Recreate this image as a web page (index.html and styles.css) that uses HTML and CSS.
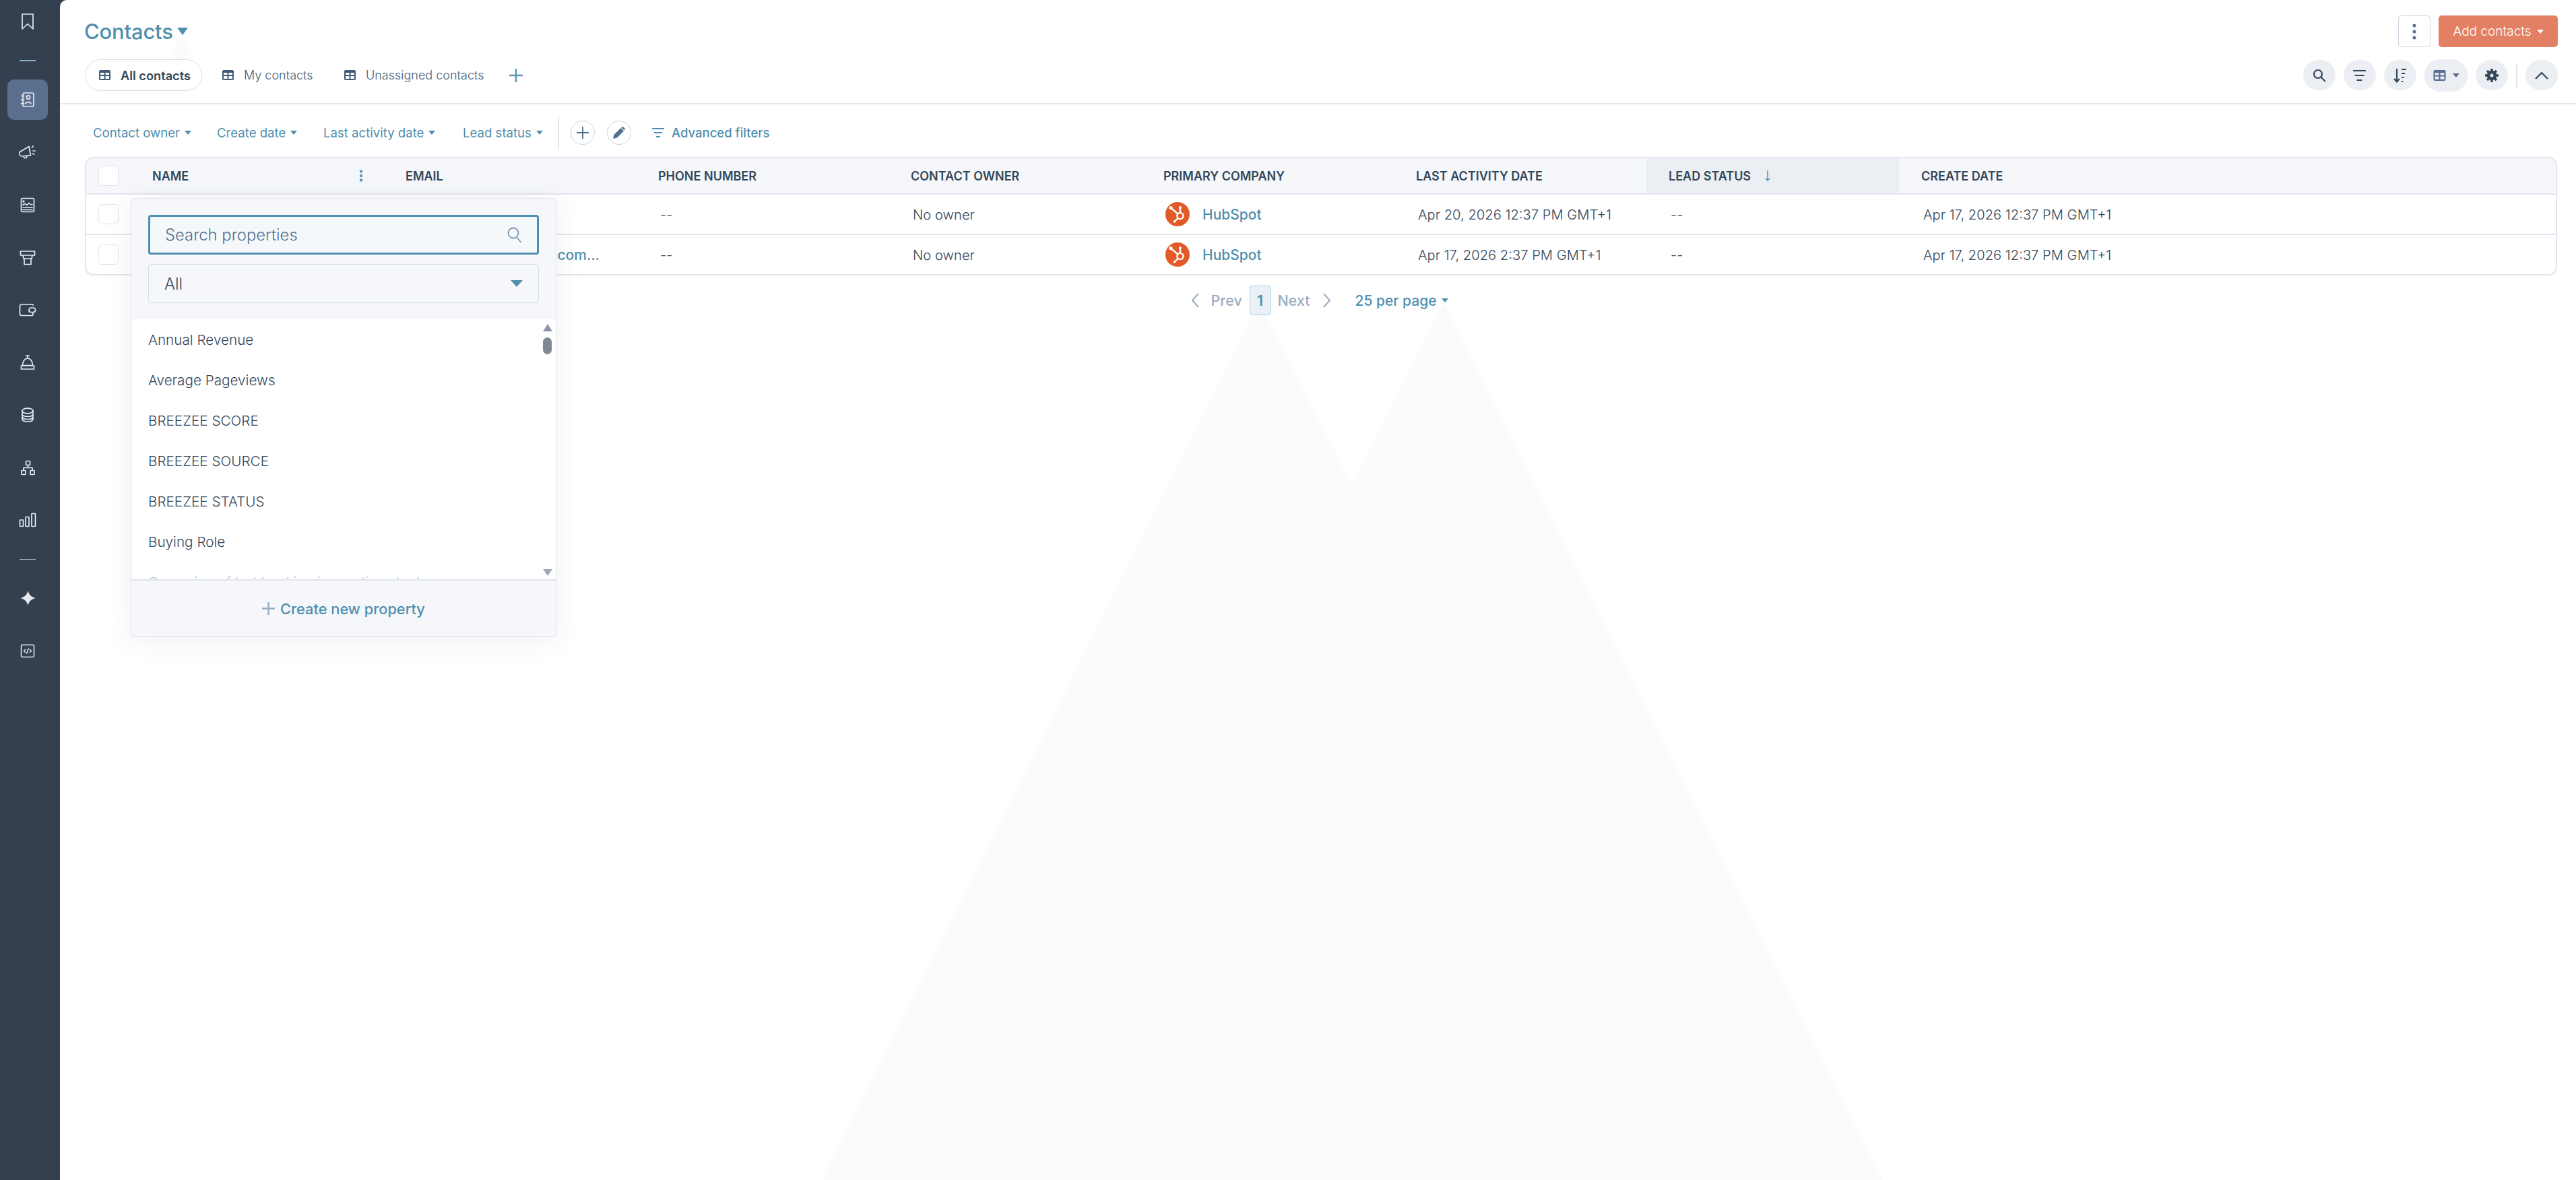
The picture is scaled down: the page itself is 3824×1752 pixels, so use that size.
FILE: index.html
```html
<!DOCTYPE html>
<html lang="en">
<head>
<meta charset="utf-8">
<title>Contacts</title>
<link rel="stylesheet" href="styles.css">
</head>
<body>
<svg width="0" height="0" class="defs">
  <symbol id="tbl" viewBox="0 0 17 15"><path fill-rule="evenodd" d="M2 0h13a2 2 0 0 1 2 2v11a2 2 0 0 1-2 2H2a2 2 0 0 1-2-2V2a2 2 0 0 1 2-2zM2 4v3h5.5V4zM9.5 4v3H15V4zM2 9v4h5.5V9zM9.5 9v4H15V9z"/></symbol>
  <symbol id="hs" viewBox="0 0 36 36">
    <circle cx="18" cy="18" r="18" fill="#e25a27"/>
    <g fill="none" stroke="#fff" stroke-width="2.4" stroke-linecap="round">
      <circle cx="22" cy="20.5" r="4.6"/>
      <path d="M22 16V9M18.500 17.500 9 9.500M18.500 24l-4.500 4.500"/>
    </g>
    <circle cx="22" cy="8" r="2" fill="#fff"/><circle cx="8" cy="8.500" r="2.600" fill="#fff"/><circle cx="13.500" cy="29" r="1.800" fill="#fff"/>
  </symbol>
</svg>
<div class="app">
  <nav class="sidebar">
    <div class="nav-top">
      <svg class="ico" width="20" height="26" viewBox="0 0 20 26"><path d="M2 2h16v22l-8-7.5L2 24z"/></svg>
    </div>
    <div class="nav-sep nav-sep-accent"><span></span></div>
    <div class="nav-item active">
      <svg class="ico" width="22" height="24" viewBox="0 0 22 24"><rect x="4" y="2" width="16" height="20" rx="2"/><path d="M1.5 6.5h4M1.5 12h4M1.5 17.5h4M8 18c.5-3.2 7-3.2 8 0"/><circle cx="12" cy="8.5" r="2.6"/></svg>
    </div>
    <div class="nav-item">
      <svg class="ico" width="26" height="21" viewBox="0 0 26 21"><path d="M1.500 9.500 15 1.500l2.500 13-14 1.500c-2.500-1-3.500-4.500-2-6.500zM7 16c0 3.500 5 3.500 5 0M19.500 3 21 1M21 8h3M20.500 12l2 1"/></svg>
    </div>
    <div class="nav-item">
      <svg class="ico" width="22" height="23" viewBox="0 0 22 23"><rect x="1.500" y="1.500" width="19" height="20" rx="1.500"/><path d="M4 11l3-1.500 3 2 3-3 2 2h3M4 15h14M4 18.500h14"/><circle cx="5" cy="6" r=".8"/></svg>
    </div>
    <div class="nav-item">
      <svg class="ico" width="24" height="23" viewBox="0 0 24 23"><path d="M1.500 2h21v6h-21zM5 8l1 5h12l1-5M7 13h10v8.500H7z"/></svg>
    </div>
    <div class="nav-item">
      <svg class="ico" width="26" height="20" viewBox="0 0 26 20"><path d="M21 3V2H4a2.500 2.500 0 0 0-2.500 2.500V16A2.500 2.500 0 0 0 4 18.500h15a2 2 0 0 0 2-2V14"/><rect x="15" y="7" width="9.500" height="6.500" rx="3"/></svg>
    </div>
    <div class="nav-item">
      <svg class="ico" width="22" height="22" viewBox="0 0 22 22"><path d="M11 1v4M8.500 1h5M3.500 15.500C3.500 9.500 7 5 11 5s7.500 4.500 7.500 10.500zM1.500 16h19v5h-19z"/></svg>
    </div>
    <div class="nav-item">
      <svg class="ico" width="20" height="22" viewBox="0 0 20 22"><ellipse cx="10" cy="5" rx="8" ry="3.800"/><path d="M2 5v12c0 2.500 3.500 4 8 4s8-1.500 8-4V5M2 9.500c0 2.500 3.500 4 8 4s8-1.500 8-4M2 13.500c0 2.500 3.500 4 8 4s8-1.500 8-4"/></svg>
    </div>
    <div class="nav-item">
      <svg class="ico" width="23" height="23" viewBox="0 0 23 23"><rect x="8.500" y="1.500" width="6" height="6" rx=".8"/><rect x="2" y="15.500" width="6" height="6" rx=".8"/><rect x="15" y="15.500" width="6" height="6" rx=".8"/><path d="M11.500 7.500v4M5 15.500v-4h13v4"/></svg>
    </div>
    <div class="nav-item">
      <svg class="ico" width="26" height="22" viewBox="0 0 26 22"><rect x="1.500" y="11" width="5" height="9.500" rx=".6"/><rect x="10" y="6.500" width="5" height="14" rx=".6"/><rect x="19" y="1.500" width="5.500" height="19" rx=".6"/></svg>
    </div>
    <div class="nav-sep"><span></span></div>
    <div class="nav-item">
      <svg class="ico-fill" width="23" height="22" viewBox="0 0 24 24"><path d="M12 0C13.500 6.500 17 10 24 12 17 14 13.500 17.500 12 24 10.500 17.500 7 14 0 12 7 10 10.500 6.500 12 0z"/></svg>
    </div>
    <div class="nav-item">
      <svg class="ico ico-thin" width="22" height="21" viewBox="0 0 22 21"><rect x="1.500" y="1.500" width="19" height="18" rx="2"/><path d="M7.500 8.500 5.500 10.500l2 2M14.500 8.500l2 2-2 2M12.300 7l-2.600 7"/></svg>
    </div>
  </nav>

  <main class="main">
    <svg class="backdrop" width="3735" height="1752" viewBox="89 0 3735 1752" aria-hidden="true">
      <polygon points="1221,1752 1869,447 2006,719 2143,447 2794,1752"/>
      <polygon points="270,50 252,88 288,88"/>
    </svg>

    <header class="page-head">
      <div class="head-row">
        <div class="title">Contacts<span class="caret caret-lg"></span></div>
        <div class="head-actions">
          <button class="more-btn"><svg width="6" height="24" viewBox="0 0 6 24"><circle cx="3" cy="3" r="2.500"/><circle cx="3" cy="12" r="2.500"/><circle cx="3" cy="21" r="2.500"/></svg></button>
          <button class="add-btn">Add contacts<span class="caret caret-white"></span></button>
        </div>
      </div>
      <div class="tabs-row">
        <div class="tabs">
          <div class="tab tab-active"><svg class="tbl-ico"><use href="#tbl"/></svg><span>All contacts</span></div>
          <div class="tab"><svg class="tbl-ico"><use href="#tbl"/></svg><span>My contacts</span></div>
          <div class="tab"><svg class="tbl-ico"><use href="#tbl"/></svg><span>Unassigned contacts</span></div>
          <svg class="tab-add" width="20" height="20" viewBox="0 0 20 20"><path d="M10 0v20M0 10h20"/></svg>
        </div>
        <div class="view-tools">
          <div class="tool"><svg width="20" height="20" viewBox="0 0 20 20" class="stroke-ink"><circle cx="8" cy="8" r="6"/><path d="M12.500 12.500 19 19"/></svg></div>
          <div class="tool"><svg width="20" height="16" viewBox="0 0 20 16" class="stroke-ink"><path d="M0 1h19M2.500 8h14M5.500 15h8"/></svg></div>
          <div class="tool"><svg width="20" height="22" viewBox="0 0 20 22" class="stroke-ink"><path d="M5 1v19M1 16l4 4.500L9 16"/><path d="M12 2h7M12 8h5M12 14h3.500M12 20h2"/></svg></div>
          <div class="tool tool-wide"><svg class="tbl-tool"><use href="#tbl"/></svg><span class="caret caret-slate"></span></div>
          <div class="tool"><svg width="20" height="20" viewBox="0 0 20 20" class="gear"><circle cx="10" cy="10" r="5.500"/><path d="M10 0v20M0 10h20M3 3l14 14M17 3 3 17"/><circle cx="10" cy="10" r="2.500" fill="#ebeff4" stroke="none"/></svg></div>
          <span class="tool-sep"></span>
          <div class="tool"><svg width="20" height="12" viewBox="0 0 20 12" class="stroke-ink"><path d="M1 11 10 2l9 9"/></svg></div>
        </div>
      </div>
    </header>

    <section class="filters">
      <div class="filter">Contact owner<span class="caret"></span></div>
      <div class="filter">Create date<span class="caret"></span></div>
      <div class="filter">Last activity date<span class="caret"></span></div>
      <div class="filter">Lead status<span class="caret"></span></div>
      <span class="filter-sep"></span>
      <div class="round-btn"><svg width="20" height="20" viewBox="0 0 20 20"><path d="M10 1v18M1 10h18" stroke="#516f90" stroke-width="2" fill="none"/></svg></div>
      <div class="round-btn"><svg width="18" height="18" viewBox="0 0 18 18"><path d="M0 18l1.500-6L11.500 2l4.500 4.500-10 10zM13 .8c.8-.8 1.700-.8 2.500 0l1.700 1.700c.8.800.8 1.700 0 2.500l-.6.600-4.200-4.200z" fill="#516f90"/></svg></div>
      <div class="adv"><svg width="18" height="14" viewBox="0 0 18 14"><path d="M0 1h18M3 7h12M6 13h6" stroke="#4f8fad" stroke-width="2" fill="none"/></svg><span>Advanced filters</span></div>
    </section>

    <section class="table">
      <div class="row row-head">
        <div class="cell cell-first"><span class="check"></span><span class="th-name">NAME</span><svg class="col-dots" width="6" height="18" viewBox="0 0 6 18"><circle cx="3" cy="2.500" r="2.200"/><circle cx="3" cy="9" r="2.200"/><circle cx="3" cy="15.500" r="2.200"/></svg></div>
        <div class="cell">EMAIL</div>
        <div class="cell">PHONE NUMBER</div>
        <div class="cell">CONTACT OWNER</div>
        <div class="cell">PRIMARY COMPANY</div>
        <div class="cell">LAST ACTIVITY DATE</div>
        <div class="cell cell-sorted">LEAD STATUS<svg class="sort-arrow" width="10" height="16" viewBox="0 0 10 16"><path d="M5 0v15M1.500 11.500 5 15l3.500-3.500" fill="none" stroke="#4f8fad" stroke-width="1.500"/></svg></div>
        <div class="cell">CREATE DATE</div>
      </div>
      <div class="row row-body">
        <div class="cell cell-first"><span class="check"></span></div>
        <div class="cell"></div>
        <div class="cell">--</div>
        <div class="cell">No owner</div>
        <div class="cell cell-company"><svg class="hs-logo"><use href="#hs"/></svg><span class="link">HubSpot</span></div>
        <div class="cell">Apr 20, 2026 12:37 PM GMT+1</div>
        <div class="cell">--</div>
        <div class="cell">Apr 17, 2026 12:37 PM GMT+1</div>
      </div>
      <div class="row row-body row-last">
        <div class="cell cell-first"><span class="check"></span></div>
        <div class="cell cell-email"><span class="link">.com...</span></div>
        <div class="cell">--</div>
        <div class="cell">No owner</div>
        <div class="cell cell-company"><svg class="hs-logo"><use href="#hs"/></svg><span class="link">HubSpot</span></div>
        <div class="cell">Apr 17, 2026 2:37 PM GMT+1</div>
        <div class="cell">--</div>
        <div class="cell">Apr 17, 2026 12:37 PM GMT+1</div>
      </div>
    </section>

    <nav class="pager">
      <svg class="chev" width="12" height="22" viewBox="0 0 12 22"><path d="M11 1 2 11l9 10"/></svg>
      <span class="pg-muted pg-prev">Prev</span>
      <span class="pg-num">1</span>
      <span class="pg-muted pg-next">Next</span>
      <svg class="chev chev-next" width="12" height="22" viewBox="0 0 12 22"><path d="m1 1 9 10-9 10"/></svg>
      <span class="pg-size">25 per page<span class="caret"></span></span>
    </nav>

    <aside class="popover">
      <div class="pop-top">
        <div class="search"><span>Search properties</span><svg width="22" height="24" viewBox="0 0 22 24"><circle cx="9" cy="9" r="7.500"/><path d="m14 15 6.500 8"/></svg></div>
        <div class="select"><span>All</span><i class="select-caret"></i></div>
      </div>
      <div class="pop-list">
        <div class="opt">Annual Revenue</div>
        <div class="opt">Average Pageviews</div>
        <div class="opt">BREEZEE SCORE</div>
        <div class="opt">BREEZEE SOURCE</div>
        <div class="opt">BREEZEE STATUS</div>
        <div class="opt">Buying Role</div>
        <div class="opt">Campaign of last booking in meetings tool</div>
        <div class="pop-fade"></div>
        <div class="scrollbar"><i class="sb-up"></i><i class="sb-thumb"></i><i class="sb-down"></i></div>
      </div>
      <div class="pop-foot"><svg width="19" height="19" viewBox="0 0 19 19"><path d="M9.500 0v19M0 9.500h19" stroke="#99acc2" stroke-width="2.500" fill="none"/></svg><span>Create new property</span></div>
    </aside>
  </main>
</div>
</body>
</html>
```
FILE: styles.css
```css
* { box-sizing: border-box; }
html, body { margin: 0; padding: 0; }
body { width: 3824px; height: 1752px; overflow: hidden; font-family: Inter, "Noto Sans", sans-serif; color: #33475b; font-size: 20px; }
.defs { position: absolute; }
button { font-family: inherit; padding: 0; }

.app { display: flex; width: 3824px; height: 1752px; background: #34404f; }

/* sidebar */
.sidebar { width: 89px; flex: none; padding-right: 7px; display: flex; flex-direction: column; align-items: center; }
.nav-top { height: 64px; margin-bottom: 7px; display: flex; align-items: center; justify-content: center; }
.nav-sep { height: 38px; width: 100%; display: flex; align-items: center; justify-content: center; }
.nav-sep span { display: block; width: 24px; height: 1px; background: #aab4c0; }
.nav-sep-accent span { height: 2px; background: #7fb3c8; }
.nav-item { width: 60px; height: 78px; display: flex; align-items: center; justify-content: center; position: relative; }
.nav-item.active::before { content: ""; position: absolute; inset: 9px 0; background: #5a6f8e; border-radius: 10px; }
.nav-item .ico, .nav-item .ico-fill { position: relative; }
.ico { fill: none; stroke: #e6e9ef; stroke-width: 1.700; stroke-linejoin: round; stroke-linecap: round; }
.ico-thin { stroke-width: 1.500; }
.ico-fill { fill: #e6e9ef; }

/* main */
.main { flex: 1; position: relative; background: #fff; border-top-left-radius: 10px; overflow: hidden; }
.backdrop { position: absolute; left: 0; top: 0; fill: #fafbfb; }
.page-head, .filters, .table, .pager { position: relative; }

.page-head { height: 155px; padding: 23px 27px 0 37px; border-bottom: 2px solid #e3e6ee; }
.head-row { height: 47px; display: flex; align-items: center; justify-content: space-between; }
.title { font-size: 31px; font-weight: 500; color: #4f8fad; display: flex; align-items: center; letter-spacing: -0.2px; margin-left: -1px; }
.caret { display: inline-block; width: 0; height: 0; border-left: 5px solid transparent; border-right: 5px solid transparent; border-top: 6px solid #4f8fad; margin-left: 7px; }
.caret-lg { border-left-width: 8.500px; border-right-width: 8.500px; border-top-width: 11px; margin-left: 6px; }
.caret-white { border-top-color: #fff; border-left-width: 5.500px; border-right-width: 5.500px; margin-left: 8px; }
.caret-slate { border-top-color: #5a6f8e; border-left-width: 5.500px; border-right-width: 5.500px; margin-left: 10px; }
.head-actions { display: flex; gap: 12px; }
.more-btn { width: 48px; height: 47px; border: 1.500px solid #cbd6e2; border-radius: 4px; background: #fff; display: flex; align-items: center; justify-content: center; fill: #5a6f8e; }
.add-btn { width: 177px; height: 47px; border: 0; border-radius: 5px; background: #e37f62; color: #fff; font-size: 19px; font-weight: 300; display: flex; align-items: center; justify-content: center; }

.tabs-row { height: 47px; margin-top: 18px; display: flex; align-items: center; justify-content: space-between; }
.tabs { display: grid; grid-template-columns: 174px 181px 275px 20px; align-items: center; }
.tab { height: 47px; display: flex; align-items: center; gap: 15px; padding-left: 30px; font-size: 18px; font-weight: 300; color: #425b76; white-space: nowrap; }
.tab-active { border: 1.500px solid #d7dfe8; border-radius: 24px; font-size: 18.200px; font-weight: 600; color: #33475b; padding-left: 20px; }
.tbl-ico { width: 17px; height: 15px; fill: #425b76; flex: none; }
.tab-add { fill: none; stroke: #5a97b5; stroke-width: 2.500; }

.view-tools { display: flex; align-items: center; gap: 12px; }
.tool { width: 48px; height: 45px; border-radius: 23px; background: #ebeff4; display: flex; align-items: center; justify-content: center; }
.tool-wide { width: 64px; height: 48px; }
.tbl-tool { width: 19px; height: 16px; fill: #5a6f8e; }
.tool-sep { width: 2px; height: 36px; background: #e3e6ee; }
.stroke-ink { fill: none; stroke: #33475b; stroke-width: 2.200; }
.gear { fill: none; stroke: #33475b; stroke-width: 3.500; }

.filters { height: 78px; padding: 6px 0 0 49px; display: grid; grid-template-columns: 184px 158px 207px 141px 2px 17px 36px 18px 36px auto; align-items: center; justify-content: start; }
.filter { font-size: 18.600px; font-weight: 400; color: #4f8fad; display: flex; align-items: center; }
.filter-sep { width: 2px; height: 48px; background: #e3e6ee; grid-column: 5; }
.round-btn { width: 36px; height: 36px; border: 1.500px solid #cbd6e2; border-radius: 50%; display: flex; align-items: center; justify-content: center; }
.filters .round-btn:nth-child(6) { grid-column: 7; }
.filters .round-btn:nth-child(7) { grid-column: 9; }
.adv { grid-column: 10; margin-left: 31px; display: flex; align-items: center; gap: 11px; font-size: 18.500px; font-weight: 500; color: #4f8fad; }

/* table */
.table { margin: 0 28px 0 37px; border: 2px solid #e3e6ee; border-radius: 12px; overflow: hidden; background: #fff; }
.row { display: grid; grid-template-columns: 441px repeat(6, 375px) 1fr; }
.row-head { height: 54px; background: #f5f7fa; border-bottom: 2px solid #e3e6ee; font-size: 18px; font-weight: 600; }
.row-head .cell { padding-left: 33px; }
.row-head .cell-first { padding-left: 18px; }
.row-head .cell-sorted { background: #ebeff4; }
.row-body { height: 60px; border-bottom: 2px solid #e3e6ee; font-size: 20.200px; font-weight: 300; }
.row-last { border-bottom: 0; height: 58px; }
.cell { display: flex; align-items: center; padding-left: 36px; }
.cell-first { padding-left: 18px; }
.check { width: 30px; height: 30px; border: 1.500px solid #dfe3eb; border-radius: 5px; background: #fff; flex: none; }
.th-name { margin-left: 50px; flex: 1; }
.col-dots { fill: #5a97b5; margin-right: 30px; }
.sort-arrow { margin-left: 20px; }
.cell-company { gap: 19px; }
.hs-logo { width: 36px; height: 36px; flex: none; }
.link { color: #4f8fad; font-weight: 500; font-size: 21px; }
.cell-email { justify-content: flex-end; padding-right: 54px; }

/* pager */
.pager { margin-top: 15px; height: 44px; display: flex; align-items: center; justify-content: center; padding-left: 4px; font-size: 21.500px; }
.chev { fill: none; stroke: #99acc2; stroke-width: 2; flex: none; }
.chev-next { margin-left: 19px; }
.pg-muted { color: #99acc2; font-weight: 500; white-space: nowrap; }
.pg-prev { margin-left: 18px; width: 47px; }
.pg-next { width: 48px; }
.pg-num { width: 32px; height: 44px; margin: 0 10px; border: 1.500px solid #a6cfe6; border-radius: 4px; background: #eaf0f6; color: #4f8fad; font-weight: 600; display: flex; align-items: center; justify-content: center; }
.pg-size { margin-left: 36px; width: 138px; color: #4f8fad; font-size: 21px; font-weight: 500; display: flex; align-items: center; white-space: nowrap; }

/* popover */
.popover { position: absolute; left: 105px; top: 294px; width: 632px; height: 652px; background: #f5f7fa; border: 1.500px solid #dfe3eb; border-radius: 4px; box-shadow: 0 4px 40px rgba(45, 62, 80, 0.08); display: flex; flex-direction: column; overflow: hidden; }
.pop-top { height: 179px; padding: 24px 25px 0; flex: none; }
.search { height: 59px; border: 3px solid #4f8fad; border-radius: 4px; padding: 0 22px; display: flex; align-items: center; justify-content: space-between; font-size: 23.800px; font-weight: 300; color: #516f90; background: #f5f8fa; }
.search svg { fill: none; stroke: #7c98b6; stroke-width: 1.800; }
.select { height: 58px; margin-top: 14px; border: 1.500px solid #d6dde6; border-radius: 4px; padding: 0 23px; display: flex; align-items: center; justify-content: space-between; font-size: 23.800px; font-weight: 300; color: #33475b; }
.select-caret { width: 0; height: 0; border-left: 9.500px solid transparent; border-right: 9.500px solid transparent; border-top: 10px solid #4f8fad; }
.pop-list { height: 388px; background: #fff; position: relative; overflow: hidden; padding: 0 25px; flex: none; border-bottom: 2px solid #dfe3eb; }
.opt { height: 60px; display: flex; align-items: center; font-size: 20.700px; font-weight: 300; color: #33475b; white-space: nowrap; flex: none; }
.pop-fade { position: absolute; left: 0; right: 0; bottom: 0; height: 30px; background: linear-gradient(rgba(255,255,255,0), rgba(255,255,255,.7)); }
.scrollbar { position: absolute; right: 5px; top: 7px; width: 14px; }
.scrollbar i { display: block; }
.sb-up { width: 0; height: 0; border-left: 7px solid transparent; border-right: 7px solid transparent; border-bottom: 11px solid #8a94a6; }
.sb-thumb { width: 13px; height: 25px; border-radius: 7px; background: #808896; margin-top: 9px; }
.sb-down { position: absolute; top: 364px; width: 0; height: 0; border-left: 7px solid transparent; border-right: 7px solid transparent; border-top: 10px solid #a0a8b6; }
.pop-foot { flex: 1; display: flex; align-items: center; justify-content: center; gap: 8px; font-size: 21.800px; font-weight: 500; color: #4f8fad; }
```
